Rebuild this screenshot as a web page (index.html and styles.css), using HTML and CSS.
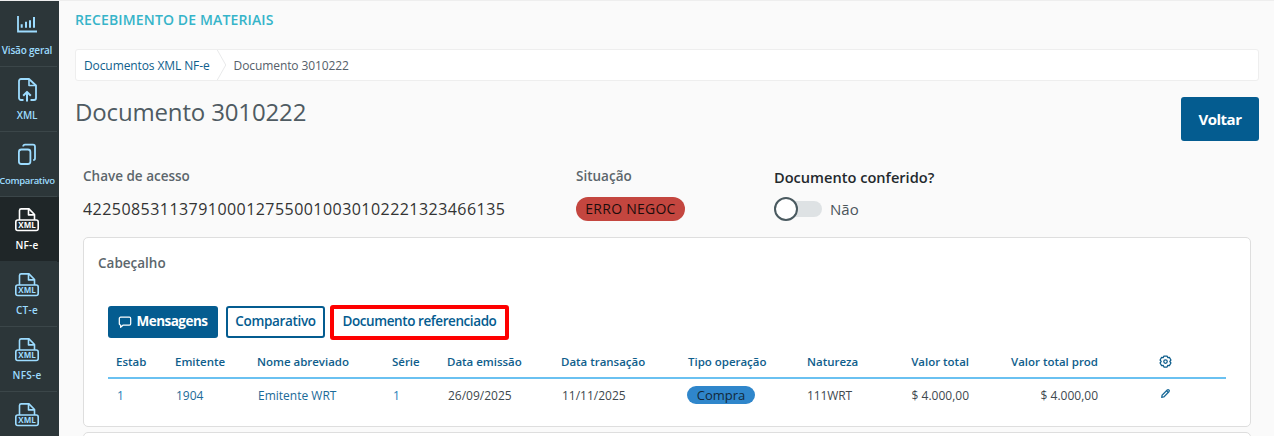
FILE: index.html
```html
<!DOCTYPE html>
<html lang="pt-BR">
<head>
<meta charset="utf-8">
<title>Documento 3010222</title>
<link rel="stylesheet" href="styles.css">
</head>
<body>
<svg class="defs" width="0" height="0" aria-hidden="true">
  <symbol id="xml" viewBox="0 0 24 24">
    <path d="M4.500 12V2.500A1.700 1.700 0 0 1 6.200 .9H14l5.500 5.600V12M13.500 .9v6h6" fill="none" stroke="currentColor" stroke-width="1.600" stroke-linejoin="round"/>
    <rect x=".8" y="12" width="22.400" height="10.500" rx="2" fill="none" stroke="currentColor" stroke-width="1.600"/>
  </symbol>
</svg>
<div class="app">
  <nav class="side">
    <a class="item">
      <svg class="ico" viewBox="0 0 24 24" fill="none" stroke="currentColor" stroke-width="1.800"><path d="M3 3v15.500h19"/><path d="M6.700 14.700v-3.400M11 14.700V8.700M15 14.700V7.300M19 14.700V4" stroke-width="2"/></svg>
      <span>Visão geral</span>
    </a>
    <a class="item">
      <svg class="ico" viewBox="0 0 24 24" fill="none" stroke="currentColor" stroke-width="1.800" stroke-linejoin="round"><path d="M8.500 22H6a2 2 0 0 1-2-2V3a2 2 0 0 1 2-2h8l7 6.500V20a2 2 0 0 1-2 2h-3.500"/><path d="M14 1v6.500h7" stroke-width="1.600"/><path d="M12 23.500V14M8.200 17.700l3.800-3.800 3.800 3.800" stroke-width="2"/></svg>
      <span>XML</span>
    </a>
    <a class="item">
      <svg class="ico" viewBox="0 0 24 24" fill="none" stroke="currentColor" stroke-width="1.800"><rect x="3.900" y="6.500" width="11.500" height="14.500" rx="2.500"/><path d="M8.200 3.500A1.800 1.800 0 0 1 10 1.700h8a2 2 0 0 1 2 2v11.500a2 2 0 0 1-1.800 2"/></svg>
      <span class="tight">Comparativo</span>
    </a>
    <a class="item active">
      <span class="xml-ico"><svg class="ico"><use href="#xml"/></svg><b>XML</b></span>
      <span class="wide">NF-e</span>
    </a>
    <a class="item">
      <span class="xml-ico"><svg class="ico"><use href="#xml"/></svg><b>XML</b></span>
      <span class="wide">CT-e</span>
    </a>
    <a class="item">
      <span class="xml-ico"><svg class="ico"><use href="#xml"/></svg><b>XML</b></span>
      <span class="wide">NFS-e</span>
    </a>
    <a class="item">
      <span class="xml-ico"><svg class="ico"><use href="#xml"/></svg><b>XML</b></span>
    </a>
  </nav>
  <main class="main">
    <div class="module">RECEBIMENTO DE MATERIAIS</div>
    <div class="crumbs">
      <a class="crumb-link">Documentos XML NF-e</a>
      <svg class="crumb-sep" viewBox="0 0 10 32" fill="none" stroke="#e6e8e9"><path d="M0 0l9 16-9 16"/></svg>
      <span class="crumb-cur">Documento 3010222</span>
    </div>
    <div class="head">
      <h1>Documento 3010222</h1>
      <button class="btn-back">Voltar</button>
    </div>
    <div class="info">
      <div class="f-key">
        <div class="lbl">Chave de acesso</div>
        <div class="val">42250853113791000127550010030102221323466135</div>
      </div>
      <div class="f-sit">
        <div class="lbl">Situação</div>
        <div class="badge-err">ERRO NEGOC</div>
      </div>
      <div class="f-conf">
        <div class="lbl-strong">Documento conferido?</div>
        <div class="toggle-row"><span class="track"><span class="knob"></span></span><span class="nao">Não</span></div>
      </div>
    </div>
    <section class="card">
      <div class="card-title">Cabeçalho</div>
      <div class="actions">
        <button class="btn solid"><svg class="msg" viewBox="0 0 16 16" fill="none" stroke="currentColor" stroke-width="1.400" stroke-linejoin="round"><path d="M3 2.500h10a1.500 1.500 0 0 1 1.500 1.500v6a1.500 1.500 0 0 1-1.500 1.500H6L3 14v-2.500A1.500 1.500 0 0 1 1.500 10V4A1.500 1.500 0 0 1 3 2.500z"/></svg>Mensagens</button>
        <button class="btn outline">Comparativo</button>
        <button class="btn marked">Documento referenciado</button>
      </div>
      <table class="tbl">
        <colgroup>
          <col class="c1"><col class="c2"><col class="c3"><col class="c4"><col class="c5"><col class="c6"><col class="c7"><col class="c8"><col class="c9"><col class="c10"><col>
        </colgroup>
        <thead>
          <tr>
            <th>Estab</th><th>Emitente</th><th>Nome abreviado</th><th>Série</th><th>Data emissão</th><th>Data transação</th><th>Tipo operação</th><th>Natureza</th><th class="r">Valor total</th><th class="r">Valor total prod</th>
            <th class="tool"><svg class="gear" viewBox="0 0 24 24" fill="none" stroke="currentColor" stroke-width="2" stroke-linejoin="round"><path d="M9.500 3.200h5l1 2.500 2.700-.4 2.500 4.300L19 11.700v.6l1.700 2.100-2.500 4.300-2.700-.4-1 2.500h-5l-1-2.500-2.700.4-2.500-4.300L5 12.300v-.6L3.300 9.600l2.500-4.300 2.700.4z"/><circle cx="12" cy="12" r="2.800"/></svg></th>
          </tr>
        </thead>
        <tbody>
          <tr>
            <td class="link">1</td><td class="link2">1904</td><td class="link2">Emitente WRT</td><td class="link">1</td><td>26/09/2025</td><td>11/11/2025</td><td><span class="badge-type">Compra</span></td><td class="nat">111WRT</td><td class="r">$ 4.000,00</td><td class="r">$ 4.000,00</td>
            <td class="tool"><svg class="pen" viewBox="0 0 16 16" fill="none" stroke="currentColor" stroke-width="1.800" stroke-linejoin="round"><path d="M3 10.500l7.500-7.500a1.400 1.400 0 0 1 2.500 2.500L5.500 13 2.500 13.500z"/><path d="M9.500 4l2.500 2.500"/></svg></td>
          </tr>
        </tbody>
      </table>
    </section>
    <section class="card next"></section>
  </main>
</div>
</body>
</html>
```
FILE: styles.css
```css
* { box-sizing: border-box; }
html, body { margin: 0; height: 436px; overflow: hidden; }
body { font-family: "Open Sans", "Noto Sans", sans-serif; background: #fafafa; color: #333; }
.defs { display: block; height: 0; }
.app { display: flex; height: 436px; overflow: hidden; border-top: 1px solid #eeeeee; }

.side { width: 59px; flex: none; background: #2c3639; overflow: hidden; display: flex; flex-direction: column; padding-top: 1px; }
.item { flex: none; width: 57px; height: 65px; display: flex; flex-direction: column; align-items: center; padding: 11px 3px 0 0; color: #9ddcff; font-size: 10px; font-weight: 600; white-space: nowrap; border-bottom: 1px solid #3b4649; letter-spacing: -.2px; }
.item > span:last-child { margin-top: 7px; line-height: 13px; }
.item > span.tight { font-size: 9.500px; letter-spacing: -.35px; }
.item > span.wide { letter-spacing: .25px; }
.item.active { background: #1f2628; color: #fff; border-bottom-color: #2c3639; box-shadow: 2px 0 0 #1f2628; }
.ico { width: 24px; height: 24px; display: block; flex: none; }
.item > .xml-ico:last-child { margin-top: 0; }
.xml-ico { position: relative; display: block; flex: none; width: 24px; height: 24px; }
.xml-ico b { position: absolute; left: 0; right: 0; top: 12px; text-align: center; font-size: 8px; line-height: 10px; letter-spacing: 0; font-weight: 700; }

.main { flex: 1; min-width: 0; padding: 10px 15px 0 16px; }
.module { color: #36b4c9; font-size: 14px; font-weight: 600; line-height: 18px; letter-spacing: .14px; }
.crumbs { margin-top: 20px; height: 32px; background: #fff; border: 1px solid #eeeeee; border-radius: 3px; display: flex; align-items: center; padding-left: 8px; font-size: 12px; letter-spacing: -.1px; }
.crumb-link { color: #0f5e8c; }
.crumb-sep { width: 10px; height: 30px; margin: 0 7px 0 7px; }
.crumb-cur { color: #55606a; }
.head { display: flex; justify-content: space-between; align-items: flex-start; margin-top: 16px; }
h1 { margin: 0; font-size: 24px; font-weight: 400; line-height: 30px; color: #4f5b62; letter-spacing: -.15px; }
.btn-back { width: 78px; height: 44px; border: 0; border-radius: 3px; background: #045c90; color: #fff; font: 700 15px/20px "Open Sans", sans-serif; letter-spacing: -.5px; }

.info { display: flex; margin-top: 26px; padding-left: 8px; height: 70px; }
.f-key { width: 493px; }
.f-sit { width: 198px; }
.lbl { font-size: 13.500px; font-weight: 600; line-height: 18px; color: #5c666c; }
.val { margin-top: 14px; font-size: 16px; line-height: 20px; color: #333; letter-spacing: .45px; }
.badge-err { margin-top: 12px; width: 109px; height: 24px; border-radius: 12px; background: #c4463f; color: #1d0d0c; font-size: 14px; letter-spacing: .25px; line-height: 24px; text-align: center; }
.lbl-strong { font-size: 14.600px; font-weight: 600; line-height: 20px; color: #23292d; }
.toggle-row { display: flex; align-items: center; margin-top: 10px; height: 24px; }
.track { position: relative; width: 48px; height: 16px; border-radius: 8px; background: #dee2e4; display: block; }
.knob { position: absolute; left: 0; top: -4px; width: 24px; height: 24px; border-radius: 50%; background: #fff; border: 2px solid #4a5a60; }
.nao { margin-left: 8px; font-size: 15px; color: #4a555c; }

.card { margin-left: 8px; margin-right: 8px; height: 190px; background: #fff; border: 1px solid #dedede; border-radius: 5px; padding: 17px 24px 0; }
.card.next { height: 40px; margin-top: 5px; }
.card-title { margin-left: -10px; font-size: 13.500px; font-weight: 600; line-height: 16px; color: #5c666c; }
.actions { display: flex; gap: 8px; margin-top: 33px; align-items: center; height: 36px; }
.btn { height: 32px; border-radius: 3px; font: 600 13.500px/1 "Open Sans", sans-serif; padding: 0; letter-spacing: -.35px; }
.btn.solid { width: 110px; border: 0; background: #045c90; color: #fff; display: flex; align-items: center; justify-content: center; gap: 4px; font-weight: 700; letter-spacing: -.5px; }
.msg { width: 14px; height: 14px; }
.btn.outline { width: 99px; border: 2px solid #045c90; background: #fff; color: #045c90; }
.btn.marked { width: 179px; height: 35px; margin-left: -3px; border: 4px solid #fe0000; background: #fff; color: #045c90; border-radius: 3px; letter-spacing: -.42px; }

.tbl { width: 1118px; table-layout: fixed; border-collapse: collapse; margin-top: 3px; font-size: 11.500px; }
.c1 { width: 59px; } .c2 { width: 82px; } .c3 { width: 135px; } .c4 { width: 55px; } .c5 { width: 114px; } .c6 { width: 127px; } .c7 { width: 119px; } .c8 { width: 84px; } .c9 { width: 94px; } .c10 { width: 129px; }
.tbl th { height: 35px; padding: 2px 8px 0; text-align: left; font-weight: 600; color: #0f5e8c; border-bottom: 2px solid #6ac1f1; white-space: nowrap; letter-spacing: -.02px; }
.tbl td { height: 33px; padding: 0 8px 0 9px; font-size: 12px; color: #40484e; white-space: nowrap; }
.tbl .r { text-align: right; padding-right: 8px; }
.tbl td.link { color: #1f7fb8; }
.tbl td.link2 { color: #1b6a98; }
.tbl td.nat { padding-left: 8px; letter-spacing: -.1px; }
.tbl .tool, .tbl td.tool { padding-left: 53px; color: #0f5e8c; }
.gear { width: 15px; height: 15px; display: block; margin-left: -1px; }
.pen { width: 11px; height: 11px; display: block; margin-left: 1px; margin-top: -4px; color: #1b6a98; }
.badge-type { display: inline-block; width: 68px; height: 18px; border-radius: 9px; background: #2f86cb; color: #12293a; line-height: 18px; text-align: center; font-size: 13px; margin-left: -2px; }
```
